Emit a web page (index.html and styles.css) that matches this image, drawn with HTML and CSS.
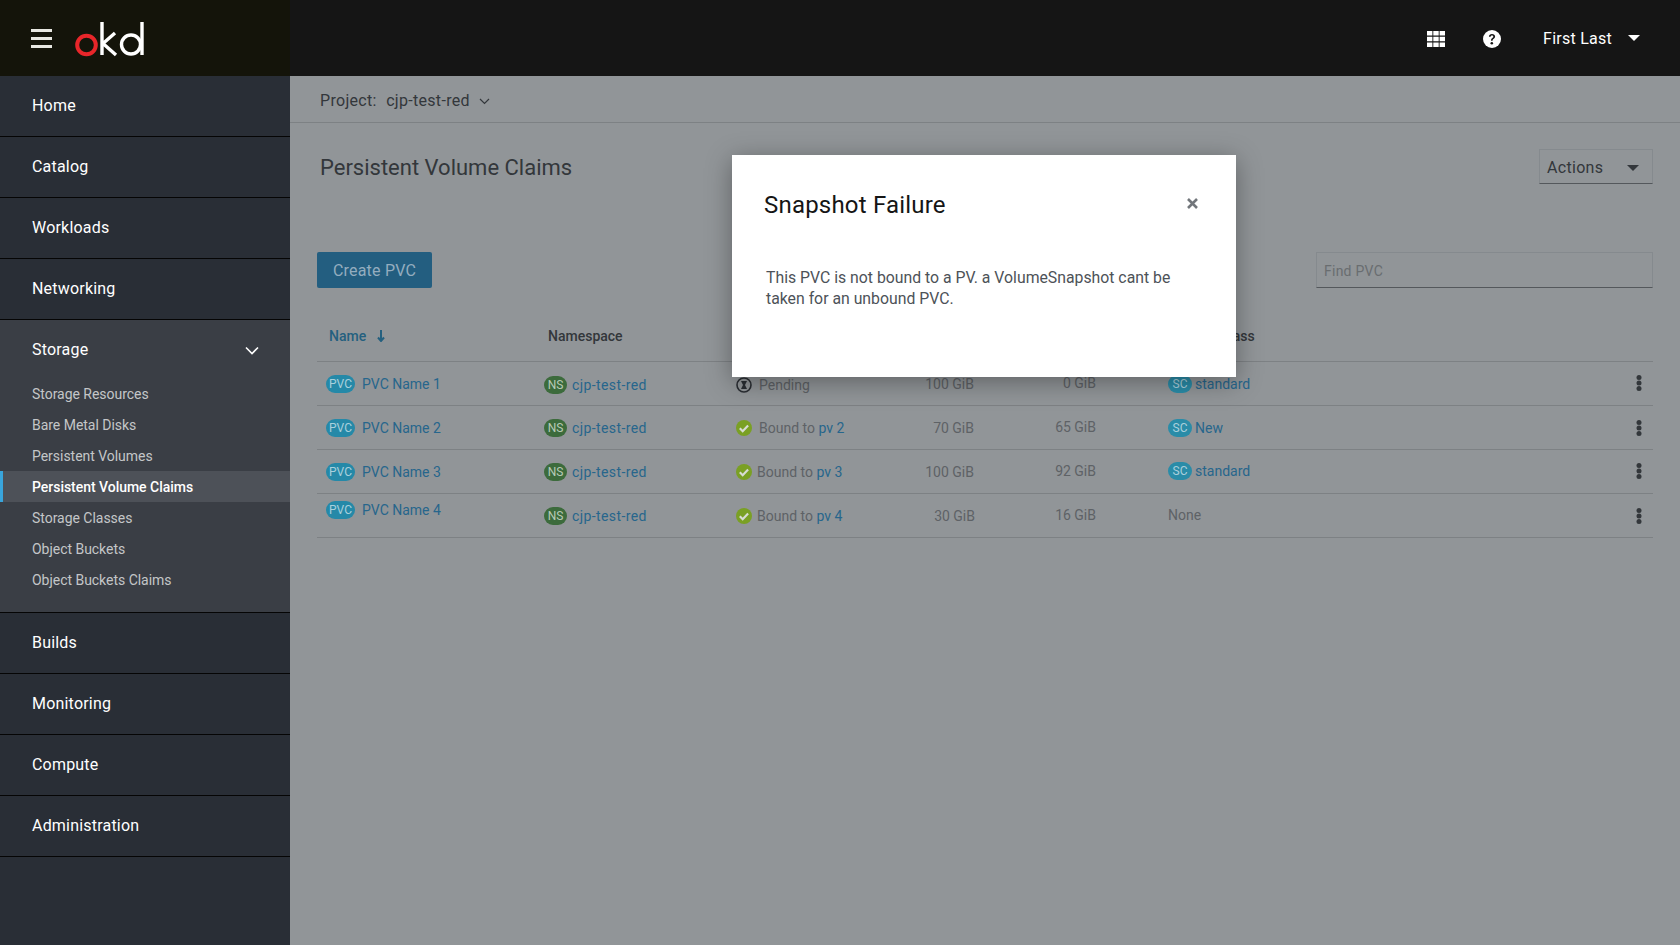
FILE: index.html
```html
<!DOCTYPE html>
<html lang="en">
<head>
  <meta charset="UTF-8">
  <title>Persistent Volume Claims</title>
  <link rel="stylesheet" href="styles.css">
</head>
<body>
  <div class="topbar">
    <div class="brand">
      <svg class="hamburger" width="21" height="19" viewBox="0 0 21 19"><path d="M0 1.500h21M0 9.500h21M0 17.500h21" stroke="#e8e8e2" stroke-width="3"/></svg>
      <svg class="logo" width="72" height="36" viewBox="0 0 72 36">
        <circle cx="11.500" cy="24" r="9.300" fill="none" stroke="#e8262a" stroke-width="4"/>
        <path d="M27 1v33M28 22.500L40 12M28 22.500L41 34" fill="none" stroke="#fff" stroke-width="3.400"/>
        <circle cx="56" cy="23.500" r="9.500" fill="none" stroke="#fff" stroke-width="3.400"/>
        <path d="M67 1v33" fill="none" stroke="#fff" stroke-width="3.400"/>
      </svg>
    </div>
    <div class="topbar-right">
      <svg class="tool" width="18" height="16" viewBox="0 0 18 16" fill="#fff">
        <path d="M0 0h5.400v4.600H0zM6.300 0h5.400v4.600H6.300zM12.600 0H18v4.600h-5.400zM0 5.700h5.400v4.600H0zM6.300 5.700h5.400v4.600H6.300zM12.600 5.700H18v4.600h-5.400zM0 11.400h5.400V16H0zM6.300 11.400h5.400V16H6.300zM12.600 11.400H18V16h-5.400z"/>
      </svg>
      <svg class="tool help" width="18" height="18" viewBox="0 0 18 18">
        <circle cx="9" cy="9" r="9" fill="#fff"/>
        <path d="M5.900 6.800C6 4.900 7.300 4 9 4c1.800 0 3.100 1 3.100 2.600 0 2.300-2.500 2.200-2.500 4.100H8c0-2.800 2.300-2.800 2.300-4 0-.7-.5-1.200-1.300-1.200-.8 0-1.300.5-1.400 1.300z" fill="#151515"/>
        <circle cx="8.800" cy="13.200" r="1.300" fill="#151515"/>
      </svg>
      <span class="user">First Last</span>
      <span class="caret caret-white"></span>
    </div>
  </div>

  <div class="layout">
    <!-- sidebar -->
    <div class="sidebar">
      <a class="nav-item">Home</a>
      <a class="nav-item">Catalog</a>
      <a class="nav-item">Workloads</a>
      <a class="nav-item">Networking</a>
      <div class="nav-group">
        <div class="nav-group-title">
          <span class="group-label">Storage</span>
          <svg width="14" height="9" viewBox="0 0 14 9"><path d="M1 1.500l6 6 6-6" fill="none" stroke="#fff" stroke-width="1.600"/></svg>
        </div>
        <a class="sub-item">Storage Resources</a>
        <a class="sub-item">Bare Metal Disks</a>
        <a class="sub-item">Persistent Volumes</a>
        <a class="sub-item active">Persistent Volume Claims</a>
        <a class="sub-item">Storage Classes</a>
        <a class="sub-item">Object Buckets</a>
        <a class="sub-item">Object Buckets Claims</a>
      </div>
      <a class="nav-item">Builds</a>
      <a class="nav-item">Monitoring</a>
      <a class="nav-item">Compute</a>
      <a class="nav-item">Administration</a>
    </div>

    <!-- main content -->
    <div class="main">
      <div class="project-bar">
        <span class="project-label">Project:</span>
        <span>cjp-test-red</span>
        <svg width="11" height="7" viewBox="0 0 11 7"><path d="M1 1l4.500 4.500L10 1" fill="none" stroke="#33373b" stroke-width="1.200"/></svg>
      </div>

      <div class="page-head">
        <h1>Persistent Volume Claims</h1>
        <div class="actions">Actions <span class="caret"></span></div>
      </div>

      <div class="toolbar">
        <div class="btn-primary">Create PVC</div>
        <div class="find">Find PVC</div>
      </div>

      <div class="table">
        <div class="row head">
          <div class="name-cell sorted">Name
            <svg width="8" height="12" viewBox="0 0 8 12"><path d="M4 0v10M1 7.500L4 11l3-3.500" fill="none" stroke="#24607f" stroke-width="2"/></svg>
          </div>
          <div class="ns-head">Namespace</div>
          <div>Status</div>
          <div class="num">Capacity</div>
          <div class="num">Used</div>
          <div class="sc-cell">Storage Class</div>
          <div></div>
        </div>

        <div class="row">
          <div class="name-cell"><span class="badge pvc">PVC</span><a>PVC Name 1</a></div>
          <div class="ns-cell down-1"><span class="badge ns">NS</span><a>cjp-test-red</a></div>
          <div class="status down-1"><svg class="icon" width="16" height="16" viewBox="0 0 16 16"><circle cx="8" cy="8" r="7" fill="none" stroke="#2a2e33" stroke-width="1.600"/><path d="M5 4h6L9 8l2 4H5l2-4z" fill="#2a2e33"/></svg><span class="wide">Pending</span></div>
          <div class="num">100 GiB</div>
          <div class="num up-1">0 GiB</div>
          <div class="sc-cell"><span class="badge sc">SC</span><a>standard</a></div>
          <div class="kebab-cell up-1"><svg width="6" height="16" viewBox="0 0 6 16" fill="#33373b"><circle cx="3" cy="2.600" r="2.500"/><circle cx="3" cy="8" r="2.500"/><circle cx="3" cy="13.400" r="2.500"/></svg></div>
        </div>

        <div class="row">
          <div class="name-cell"><span class="badge pvc">PVC</span><a>PVC Name 2</a></div>
          <div class="ns-cell"><span class="badge ns">NS</span><a>cjp-test-red</a></div>
          <div class="status"><svg class="icon" width="16" height="16" viewBox="0 0 16 16"><circle cx="8" cy="8" r="8" fill="#7aa024"/><path d="M3.800 8.300l2.900 2.900 5.400-5.600" fill="none" stroke="#d8dcd4" stroke-width="2.200"/></svg><span class="wide">Bound to <a>pv 2</a></span></div>
          <div class="num">70 GiB</div>
          <div class="num up-1">65 GiB</div>
          <div class="sc-cell"><span class="badge sc">SC</span><a>New</a></div>
          <div class="kebab-cell"><svg width="6" height="16" viewBox="0 0 6 16" fill="#33373b"><circle cx="3" cy="2.600" r="2.500"/><circle cx="3" cy="8" r="2.500"/><circle cx="3" cy="13.400" r="2.500"/></svg></div>
        </div>

        <div class="row">
          <div class="name-cell"><span class="badge pvc">PVC</span><a>PVC Name 3</a></div>
          <div class="ns-cell"><span class="badge ns">NS</span><a>cjp-test-red</a></div>
          <div class="status"><svg class="icon" width="16" height="16" viewBox="0 0 16 16"><circle cx="8" cy="8" r="8" fill="#7aa024"/><path d="M3.800 8.300l2.900 2.900 5.400-5.600" fill="none" stroke="#d8dcd4" stroke-width="2.200"/></svg><span>Bound to <a>pv 3</a></span></div>
          <div class="num">100 GiB</div>
          <div class="num up-1">92 GiB</div>
          <div class="sc-cell up-1"><span class="badge sc">SC</span><a>standard</a></div>
          <div class="kebab-cell up-1"><svg width="6" height="16" viewBox="0 0 6 16" fill="#33373b"><circle cx="3" cy="2.600" r="2.500"/><circle cx="3" cy="8" r="2.500"/><circle cx="3" cy="13.400" r="2.500"/></svg></div>
        </div>

        <div class="row">
          <div class="name-cell lifted"><span class="badge pvc">PVC</span><a>PVC Name 4</a></div>
          <div class="ns-cell"><span class="badge ns">NS</span><a>cjp-test-red</a></div>
          <div class="status"><svg class="icon" width="16" height="16" viewBox="0 0 16 16"><circle cx="8" cy="8" r="8" fill="#7aa024"/><path d="M3.800 8.300l2.900 2.900 5.400-5.600" fill="none" stroke="#d8dcd4" stroke-width="2.200"/></svg><span>Bound to <a>pv 4</a></span></div>
          <div class="num nudge">30 GiB</div>
          <div class="num up-1">16 GiB</div>
          <div class="sc-cell up-1"><span class="none">None</span></div>
          <div class="kebab-cell"><svg width="6" height="16" viewBox="0 0 6 16" fill="#33373b"><circle cx="3" cy="2.600" r="2.500"/><circle cx="3" cy="8" r="2.500"/><circle cx="3" cy="13.400" r="2.500"/></svg></div>
        </div>
      </div>
    </div>
  </div>

  <!-- modal -->
  <div class="modal">
    <div class="modal-head">
      <h2>Snapshot Failure</h2>
      <svg width="11" height="11" viewBox="0 0 11 11"><path d="M1 1l9 9M10 1l-9 9" stroke="#72767b" stroke-width="2.600"/></svg>
    </div>
    <p>This PVC is not bound to a PV. a VolumeSnapshot cant be taken for an unbound PVC.</p>
  </div>
</body>
</html>
```

FILE: styles.css
```css
* {
  box-sizing: border-box;
}

html, body {
  height: 100%;
}

body {
  margin: 0;
  font-family: "Roboto", "Liberation Sans", sans-serif;
  font-size: 14px;
  background-color: #919598;
  color: #33373b;
  overflow: hidden;
}

a {
  color: #27668c;
}

.topbar {
  display: flex;
  justify-content: space-between;
  height: 76px;
  background-color: #151515;
}

.brand {
  display: flex;
  align-items: center;
  gap: 23px;
  width: 290px;
  padding-left: 31px;
  background-color: #14140a;
}

.logo {
  margin-top: 1px;
}

.topbar-right {
  display: flex;
  align-items: center;
  padding-right: 40px;
  color: #fff;
}

.tool {
  margin-right: 38px;
  margin-top: 2px;
}

.help {
  margin-right: 42px;
}

.user {
  font-size: 16px;
  margin-right: 16px;
  letter-spacing: .25px;
}

.caret {
  display: inline-block;
  width: 0;
  height: 0;
  border-left: 6px solid transparent;
  border-right: 6px solid transparent;
  border-top: 6px solid #33373b;
}

.caret-white {
  border-top-color: #fff;
}

.layout {
  display: flex;
  height: 869px;
}

.sidebar {
  width: 290px;
  flex: none;
  background-color: #292e36;
}

.nav-item {
  display: flex;
  align-items: center;
  height: 61px;
  padding: 0 0 2px 32px;
  font-size: 16px;
  letter-spacing: .2px;
  color: #fff;
  border-bottom: 1px solid #050505;
}

.nav-group {
  height: 293px;
  background-color: #3a3e45;
  border-bottom: 1px solid #050505;
}

.nav-group-title {
  display: flex;
  align-items: center;
  justify-content: space-between;
  height: 58px;
  padding: 2px 31px 0 32px;
  font-size: 16px;
  letter-spacing: .2px;
  color: #fff;
}

.group-label {
  margin-bottom: 2px;
}

.sub-item {
  display: flex;
  align-items: center;
  height: 31px;
  padding-left: 32px;
  font-size: 14px;
  letter-spacing: -.03px;
  color: #c4c6c8;
}

.sub-item.active {
  padding-left: 29px;
  border-left: 3px solid #39a5dc;
  background-color: #4d5158;
  color: #fff;
  font-weight: 500;
}

.main {
  flex: 1;
  min-width: 0;
}

.project-bar {
  display: flex;
  align-items: center;
  gap: 9.500px;
  height: 47px;
  padding: 3px 0 0 30px;
  font-size: 16px;
  letter-spacing: .3px;
  border-bottom: 1px solid #7d8184;
}

.project-bar svg {
  margin-top: 2px;
}

.page-head {
  display: flex;
  justify-content: space-between;
  align-items: flex-start;
  height: 129px;
  padding: 26px 27px 0 30px;
}

h1 {
  margin: 1px 0 0;
  font-size: 22px;
  font-weight: 400;
  line-height: 36px;
}

.actions {
  display: flex;
  align-items: center;
  justify-content: space-between;
  width: 114px;
  height: 35px;
  padding: 2px 13px 0 7px;
  font-size: 16px;
  letter-spacing: .3px;
  border: 1px solid #858a8e;
  border-bottom-color: #54585c;
}

.toolbar {
  display: flex;
  justify-content: space-between;
  height: 36px;
  padding: 0 27px;
}

.btn-primary {
  display: flex;
  align-items: center;
  justify-content: center;
  width: 115px;
  font-size: 16px;
  letter-spacing: .2px;
  color: #94adbf;
  background-color: #235e80;
  border-radius: 2px;
}

.find {
  display: flex;
  align-items: center;
  width: 337px;
  padding: 2px 0 0 7px;
  font-size: 14px;
  letter-spacing: .25px;
  color: #696d70;
  border: 1px solid #858a8e;
  border-bottom-color: #54585c;
}

.table {
  margin: 0 27px;
}

.row {
  display: grid;
  grid-template-columns: 227px 192px 124px 114px 122px 504px 54px;
  align-items: center;
  height: 44px;
  font-size: 14px;
  color: #5e6266;
  border-bottom: 1px solid #7d8184;
}

.row.head {
  height: 74px;
  padding: 24px 0 2px;
  font-weight: 500;
  color: #33373b;
}

.name-cell,
.ns-cell,
.sc-cell,
.status {
  display: flex;
  align-items: center;
}

.name-cell {
  padding-left: 9px;
}

.sorted {
  gap: 11px;
  padding-left: 12px;
  color: #24607f;
}

.ns-head {
  padding-left: 4px;
}

.ns-cell a {
  letter-spacing: .4px;
}

.sc-cell {
  padding-left: 72px;
}

.num {
  text-align: right;
}

.nudge {
  transform: translateX(1px);
}

.down-1 {
  margin-top: 2px;
}

.up-1 {
  margin-bottom: 2px;
}

.lifted {
  margin-bottom: 11px;
}

.badge {
  display: inline-block;
  flex: none;
  height: 18px;
  border-radius: 9px;
  font-size: 12px;
  line-height: 18px;
  text-align: center;
}

.pvc {
  width: 29px;
  margin-right: 7px;
  background-color: #2589a8;
  color: #a9d0dc;
}

.ns {
  width: 23px;
  margin-right: 5px;
  background-color: #3c6b3c;
  color: #b7cab7;
}

.sc {
  width: 24px;
  margin-right: 3px;
  background-color: #2a8ca8;
  color: #a9d0dc;
}

.none {
  color: #5e6266;
}

.icon {
  margin-right: 5px;
  flex: none;
}

.status .wide {
  padding-left: 2px;
}

.kebab-cell {
  display: flex;
  justify-content: flex-end;
  padding-right: 12px;
}

.modal {
  position: absolute;
  top: 155px;
  left: 732px;
  width: 504px;
  height: 222px;
  padding: 34px 38px 0 32px;
  background-color: #fff;
  box-shadow: 0 5px 24px rgba(3, 3, 3, .35);
}

.modal-head {
  display: flex;
  align-items: center;
  justify-content: space-between;
  height: 28px;
}

h2 {
  margin: 4px 0 0;
  font-size: 24px;
  font-weight: 400;
  letter-spacing: .2px;
  color: #151515;
}

.modal p {
  margin: 50px 0 0 2px;
  width: 430px;
  font-size: 15.800px;
  line-height: 21px;
  color: #4d5258;
}
```
